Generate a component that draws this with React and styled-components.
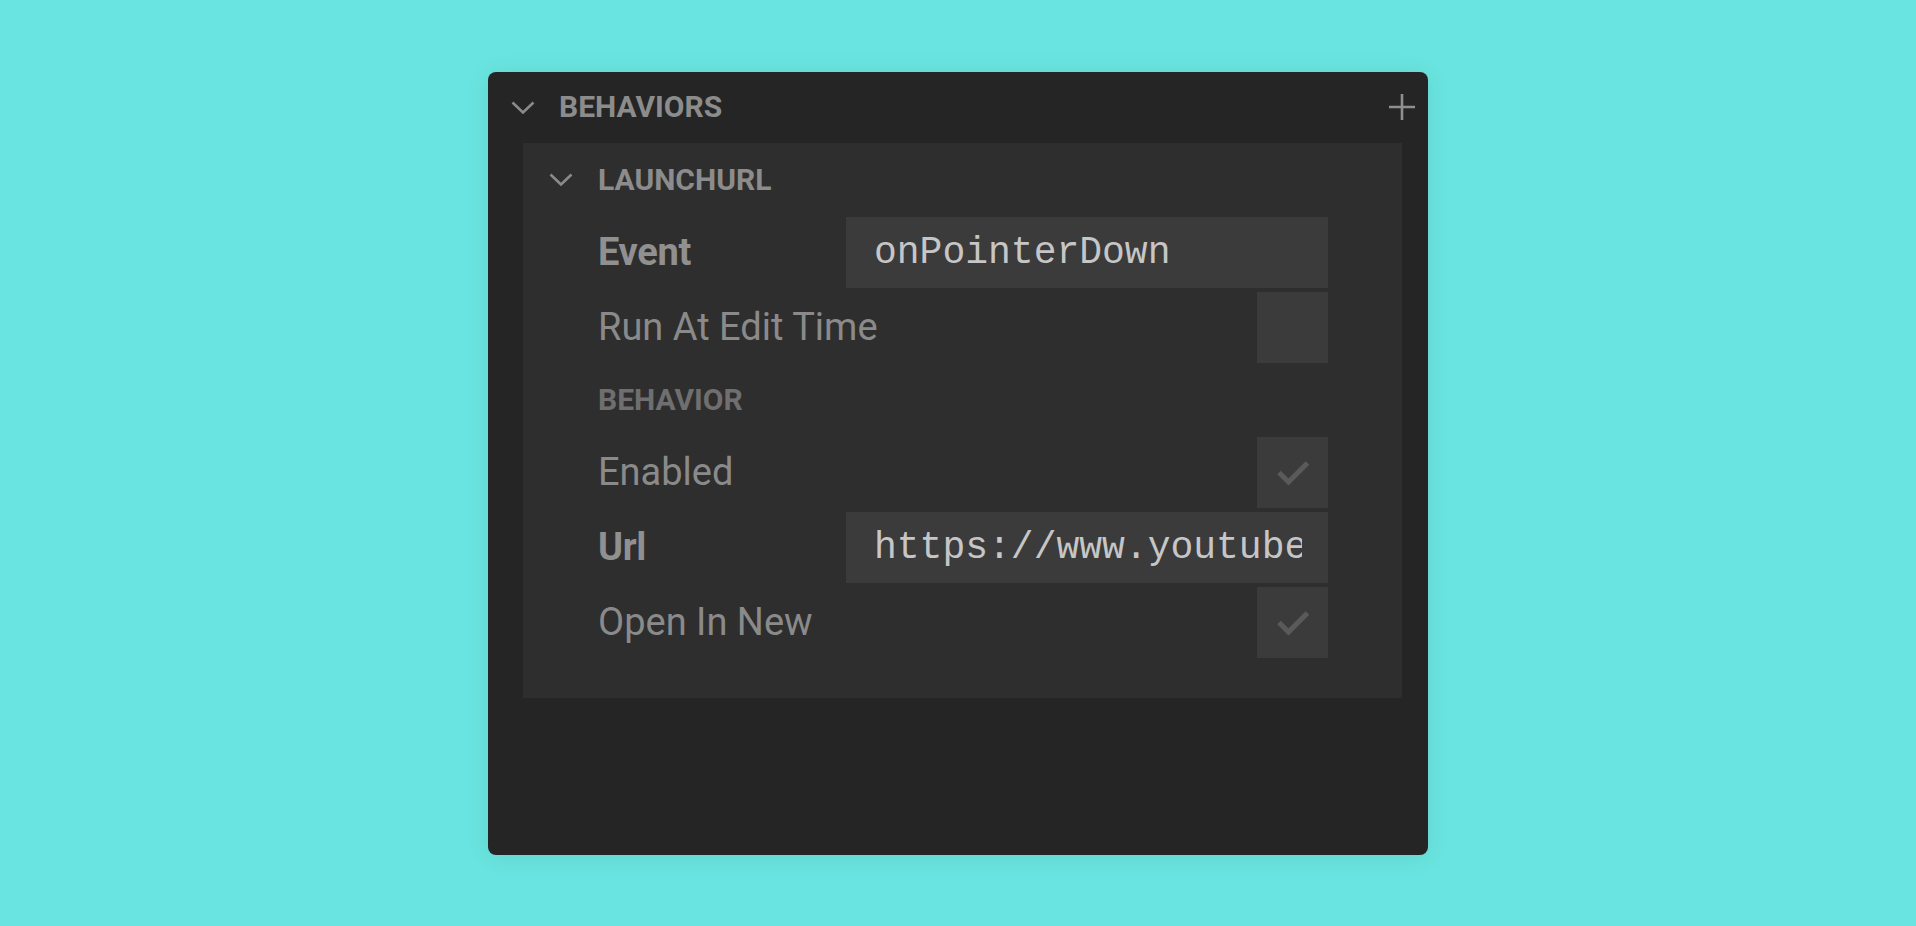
import React, { useState } from 'react';
import styled, { createGlobalStyle } from 'styled-components';

const GlobalStyle = createGlobalStyle`
  * { box-sizing: border-box; }
  body {
    margin: 0;
    background: #6ae4e0;
    font-family: Roboto, "Liberation Sans", sans-serif;
  }
`;

const Page = styled.div`
  height: 100vh;
  display: flex;
  align-items: center;
  justify-content: center;
`;

const Panel = styled.div`
  width: 940px;
  height: 783px;
  background: #252525;
  border-radius: 8px;
  box-shadow: 0 2px 24px rgba(0, 0, 0, 0.08);
  display: flex;
  flex-direction: column;
`;

const PanelHeader = styled.div`
  height: 71px;
  display: flex;
  align-items: center;
  padding: 0 13px 0 23px;
  gap: 24px;
`;

const Heading = styled.span`
  font-size: 30px;
  font-weight: 700;
  text-transform: uppercase;
  color: ${(p) => p.$color || '#8c8c8c'};
  line-height: 1;
`;

const AddButton = styled.button`
  margin-left: auto;
  width: 26px;
  height: 26px;
  padding: 0;
  border: none;
  background: none;
  display: flex;
  cursor: pointer;
`;

const PanelBody = styled.div`
  padding: 0 26px 0 35px;
`;

const Section = styled.div`
  background: #2e2e2e;
  padding-bottom: 40px;
`;

const SectionHeader = styled.div`
  height: 70px;
  display: flex;
  align-items: center;
  gap: 25px;
  padding: 4px 0 0 26px;
  margin-bottom: 4px;
  cursor: pointer;
`;

const Rows = styled.div`
  display: flex;
  flex-direction: column;
  gap: 4px;
  padding: 0 74px 0 75px;
`;

const Row = styled.div`
  display: grid;
  grid-template-columns: 248px 1fr;
  align-items: center;
  height: ${(p) => (p.$header ? '66px' : '71px')};
`;

const Label = styled.span`
  font-size: 38px;
  font-weight: ${(p) => (p.$bold ? 700 : 400)};
  color: ${(p) => (p.$bold ? '#909090' : '#8a8a8a')};
  letter-spacing: ${(p) => (p.$bold ? '-0.3px' : '0')};
  white-space: nowrap;
`;

const TextInput = styled.input`
  height: 71px;
  width: 100%;
  min-width: 0;
  background: #3b3b3b;
  border: none;
  outline: none;
  padding: 0 26px 0 28px;
  font-family: "Liberation Mono", "Courier New", monospace;
  font-size: 38px;
  color: #c6c6c6;
`;

const CheckBox = styled.button`
  justify-self: end;
  width: 71px;
  height: 71px;
  padding: 0;
  border: none;
  background: #3b3b3b;
  display: flex;
  align-items: center;
  justify-content: center;
  cursor: pointer;
`;

const Chevron = () => (
  <svg width="24" height="13" viewBox="0 0 24 13" fill="none">
    <polyline points="1.5,1.5 12,11.5 22.5,1.5" stroke="#8a8a8a" strokeWidth="2.6" />
  </svg>
);

const Plus = () => (
  <svg width="26" height="26" viewBox="0 0 26 26">
    <path d="M13 0v26M0 13h26" stroke="#8f8f8f" strokeWidth="2.6" />
  </svg>
);

const Check = () => (
  <svg width="71" height="71" viewBox="0 0 71 71" fill="none">
    <polyline points="22,35.5 31.5,45 50.5,26" stroke="#5a5a5a" strokeWidth="5" />
  </svg>
);

function Toggle({ checked, onChange }) {
  return (
    <CheckBox onClick={() => onChange(!checked)}>{checked && <Check />}</CheckBox>
  );
}

export default function App() {
  const [event, setEvent] = useState('onPointerDown');
  const [url, setUrl] = useState('https://www.youtube.com/');
  const [editTime, setEditTime] = useState(false);
  const [enabled, setEnabled] = useState(true);
  const [newTab, setNewTab] = useState(true);

  return (
    <Page>
      <GlobalStyle />
      <Panel>
        <PanelHeader>
          <Chevron />
          <Heading>Behaviors</Heading>
          <AddButton>
            <Plus />
          </AddButton>
        </PanelHeader>
        <PanelBody>
          <Section>
            <SectionHeader>
              <Chevron />
              <Heading>LaunchUrl</Heading>
            </SectionHeader>
            <Rows>
              <Row>
                <Label $bold>Event</Label>
                <TextInput value={event} onChange={(e) => setEvent(e.target.value)} />
              </Row>
              <Row>
                <Label>Run At Edit Time</Label>
                <Toggle checked={editTime} onChange={setEditTime} />
              </Row>
              <Row $header>
                <Heading $color="#6f6f6f">Behavior</Heading>
              </Row>
              <Row>
                <Label>Enabled</Label>
                <Toggle checked={enabled} onChange={setEnabled} />
              </Row>
              <Row>
                <Label $bold>Url</Label>
                <TextInput value={url} onChange={(e) => setUrl(e.target.value)} />
              </Row>
              <Row>
                <Label>Open In New</Label>
                <Toggle checked={newTab} onChange={setNewTab} />
              </Row>
            </Rows>
          </Section>
        </PanelBody>
      </Panel>
    </Page>
  );
}
